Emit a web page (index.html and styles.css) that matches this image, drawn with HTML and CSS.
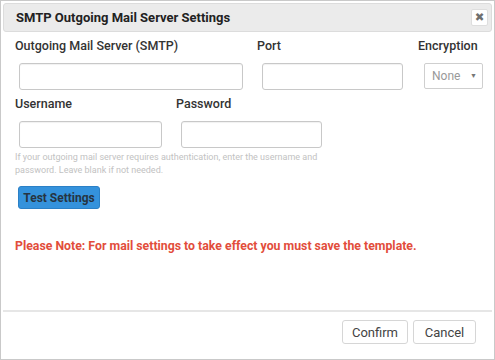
FILE: index.html
```html
<!DOCTYPE html>
<html lang="en">
<head>
    <meta charset="UTF-8">
    <title>SMTP Outgoing Mail Server Settings</title>
    <link rel="stylesheet" href="styles.css">
</head>
<body>
    <div class="dialog">
        <div class="header">
            <span class="title">SMTP Outgoing Mail Server Settings</span>
            <button class="close-btn" aria-label="Close">&#10006;</button>
        </div>

        <div class="content">
            <div class="row">
                <div class="field server">
                    <label>Outgoing Mail Server (SMTP)</label>
                    <input type="text" class="input-server">
                </div>
                <div class="field port">
                    <label>Port</label>
                    <input type="text" class="input-port">
                </div>
                <div class="field encryption">
                    <label>Encryption</label>
                    <div class="select">
                        <span>None</span>
                        <span class="arrow">&#9660;</span>
                    </div>
                </div>
            </div>

            <div class="row second">
                <div class="field user">
                    <label>Username</label>
                    <input type="text" class="input-user">
                </div>
                <div class="field pass">
                    <label>Password</label>
                    <input type="password" class="input-pass">
                </div>
            </div>

            <p class="help">If your outgoing mail server requires authentication, enter the username and password. Leave blank if not needed.</p>

            <button class="test-btn">Test Settings</button>

            <p class="note">Please Note: For mail settings to take effect you must save the template.</p>
        </div>

        <div class="footer">
            <button class="btn confirm">Confirm</button>
            <button class="btn cancel">Cancel</button>
        </div>
    </div>
</body>
</html>
```

FILE: styles.css
```css
body {
    margin: 0;
    font-family: Roboto, 'Liberation Sans', sans-serif;
    color: #333;
    background: #fff;
}

.dialog {
    width: 495px;
    height: 360px;
    box-sizing: border-box;
    border: 1px solid #c9c9c9;
    padding: 2px;
    display: flex;
    flex-direction: column;
}

.header {
    height: 29px;
    box-sizing: border-box;
    background: #ebebeb;
    border: 1px solid #dcdcdc;
    border-radius: 3px;
    display: flex;
    align-items: center;
    justify-content: space-between;
    padding: 0 3px 0 12px;
}

.title {
    font-size: 13px;
    font-weight: bold;
    color: #222;
}

.close-btn {
    width: 17px;
    height: 17px;
    padding: 0;
    background: #fff;
    border: 1px solid #dedede;
    border-radius: 2px;
    color: #6f6f6f;
    font-size: 11.5px;
    line-height: 15px;
    font-family: 'DejaVu Sans', sans-serif;
    font-weight: bold;
}

.content {
    flex: 1;
    padding: 6px 0 0 12px;
}

.row {
    display: flex;
}

.row.second {
    margin-top: 6px;
}

.field {
    display: flex;
    flex-direction: column;
}

.field label {
    font-size: 12.5px;
    font-weight: 500;
    line-height: 16px;
    color: #333;
    margin-bottom: 9px;
}

.server { width: 242px; }
.port { width: 161px; }
.user { width: 161px; }

input {
    height: 27px;
    box-sizing: border-box;
    margin: 0 0 0 4px;
    border: 1px solid #c8c8c8;
    border-radius: 3px;
    box-shadow: inset 0 1px 1px rgba(0, 0, 0, 0.06);
    font-family: inherit;
}

.input-server { width: 224px; }
.input-port { width: 141px; margin-left: 5px; }
.input-user { width: 143px; }
.input-pass { width: 141px; margin-left: 5px; }

.select {
    width: 59px;
    height: 26px;
    box-sizing: border-box;
    margin-left: 6px;
    border: 1px solid #cfcfcf;
    border-radius: 2px;
    display: flex;
    align-items: center;
    justify-content: space-between;
    padding: 0 5px 0 7px;
    font-size: 12px;
    color: #999;
}

.select .arrow {
    font-size: 7px;
    color: #777;
}

.help {
    margin: 3px 0 0 0;
    width: 320px;
    font-size: 9px;
    line-height: 13px;
    color: #c2c2c2;
}

.test-btn {
    display: block;
    margin: 9px 0 0 3px;
    width: 82px;
    height: 23px;
    padding: 0;
    background: #3492dc;
    border: 1px solid #2b80c6;
    border-radius: 3px;
    color: #263442;
    font-family: inherit;
    font-size: 12px;
    font-weight: bold;
}

.note {
    margin: 30px 0 0 0;
    font-size: 12.3px;
    line-height: 15px;
    font-weight: bold;
    color: #e24d3b;
}

.footer {
    height: 47px;
    box-sizing: border-box;
    border-top: 2px solid #e6e6e6;
    display: flex;
    justify-content: flex-end;
    align-items: flex-start;
    gap: 5px;
    padding: 8px 16px 0 0;
}

.btn {
    height: 24px;
    padding: 0;
    background: #fff;
    border: 1px solid #d6d6d6;
    border-radius: 3px;
    color: #444;
    font-family: inherit;
    font-size: 13px;
}

.confirm { width: 66px; }
.cancel { width: 63px; }
```
